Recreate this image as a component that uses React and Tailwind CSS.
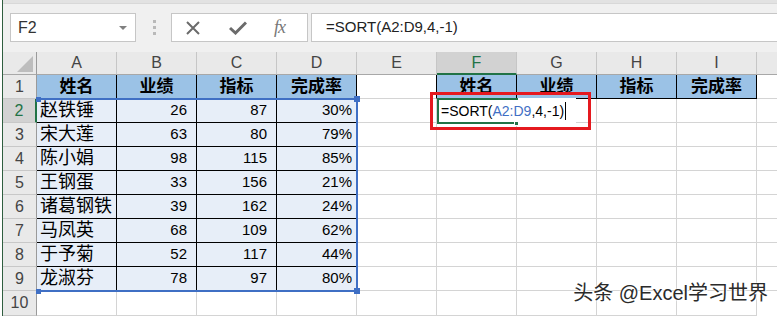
import React from 'react';

const data = [
  ['赵铁锤', 26, 87, '30%'],
  ['宋大莲', 63, 80, '79%'],
  ['陈小娟', 98, 115, '85%'],
  ['王钢蛋', 33, 156, '21%'],
  ['诸葛钢铁', 39, 162, '24%'],
  ['马凤英', 68, 109, '62%'],
  ['于予菊', 52, 117, '44%'],
  ['龙淑芬', 78, 97, '80%'],
];

const heads = ['姓名', '业绩', '指标', '完成率'];
const letters = ['A', 'B', 'C', 'D', 'E', 'F', 'G', 'H', 'I'];

function ColHeader({ letter }) {
  const active = letter === 'F';
  return (
    <div
      className={
        active
          ? 'flex items-center justify-center bg-[#d2d2d2] text-[#217346] border-r border-[#c6c6c6] border-b-2 border-b-[#217346] text-[16px]'
          : 'flex items-center justify-center bg-[#e9e9e9] text-[#444] border-r border-[#c6c6c6] border-b border-b-[#a8a8a8] text-[16px]'
      }
    >
      {letter}
    </div>
  );
}

function RowHeader({ n }) {
  const active = n === 2;
  return (
    <div
      className={
        active
          ? 'flex items-center justify-center bg-[#d2d2d2] text-[#217346] border-r-2 border-r-[#217346] border-b border-b-[#c8c8c8] text-[16px]'
          : 'flex items-center justify-center bg-[#e9e9e9] text-[#444] border-r border-r-[#9a9a9a] border-b border-b-[#c8c8c8] text-[16px]'
      }
    >
      {n}
    </div>
  );
}

function Empty({ dark }) {
  return <div className={dark ? 'border-r border-r-black border-b border-b-[#d4d4d4]' : 'border-r border-b border-[#d4d4d4]'} />;
}

function HeadCell({ text }) {
  return (
    <div className="flex items-center justify-center bg-[#9bc2e6] border-r border-b border-black font-bold text-[17px] text-black">
      {text}
    </div>
  );
}

export default function App() {
  return (
    <div className="w-[777px] h-[316px] overflow-hidden flex bg-white font-['Liberation_Sans','Noto_Sans_CJK_SC',sans-serif] relative">
      {/* sheet edge */}
      <div className="w-[3px] shrink-0 bg-white border-r border-[#2f5e3f]" />

      <div className="flex-1 flex flex-col">
        {/* formula bar */}
        <div className="h-[56px] bg-[#f0f0f0] flex flex-col">
          <div className="h-[4px] bg-[#e2e2e2] border-b border-[#d8d8d8]" />
          <div className="flex items-center h-[29px] mt-[9px]">
            <div className="ml-[7px] w-[126px] h-[29px] bg-white border border-[#c6c6c6] flex items-center justify-between pl-[7px] pr-[8px]">
              <span className="text-[16px] text-[#333]">F2</span>
              <span className="w-0 h-0 border-l-[4px] border-r-[4px] border-t-[4px] border-l-transparent border-r-transparent border-t-[#808080]" />
            </div>
            <div className="ml-[17px] w-[3px] flex flex-col gap-[3px]">
              <span className="w-[3px] h-[3px] bg-[#b9b9b9]" />
              <span className="w-[3px] h-[3px] bg-[#b9b9b9]" />
              <span className="w-[3px] h-[3px] bg-[#b9b9b9]" />
            </div>
            <div className="ml-[15px] w-[137px] h-[29px] bg-white border border-[#c6c6c6] flex items-center">
              <svg className="ml-[13px]" width="16" height="16" viewBox="0 0 16 16">
                <path d="M2 2 L14 14 M14 2 L2 14" stroke="#6b6b6b" strokeWidth="2" fill="none" />
              </svg>
              <svg className="ml-[28px]" width="18" height="14" viewBox="0 0 18 14">
                <path d="M1 7 L6.5 12 L17 1.5" stroke="#6b6b6b" strokeWidth="3" fill="none" />
              </svg>
              <span className="ml-[27px] font-['Liberation_Serif',serif] italic text-[18px] text-[#777] tracking-[-1px]">fx</span>
            </div>
            <div className="ml-[3px] flex-1 h-[29px] bg-white border border-r-0 border-[#c6c6c6] flex items-center pl-[14px] text-[15px] text-[#222]">
              =SORT(A2:D9,4,-1)
            </div>
          </div>
        </div>

        {/* sheet */}
        <div className="relative flex-1 grid grid-cols-[34px_repeat(9,80px)_1fr] grid-rows-[23px_repeat(9,24px)_1fr]">
          {/* column header row */}
          <div className="bg-[#e9e9e9] border-r border-r-[#9a9a9a] border-b border-b-[#a8a8a8] flex items-end justify-end pr-[3px] pb-[2px]">
            <svg width="16" height="16" viewBox="0 0 16 16">
              <path d="M16 0 L16 16 L0 16 Z" fill="#bdbdbd" />
            </svg>
          </div>
          {letters.map((l) => (
            <ColHeader key={l} letter={l} />
          ))}
          <div className="bg-[#e9e9e9] border-b border-b-[#a8a8a8]" />

          {/* row 1 */}
          <RowHeader n={1} />
          {heads.map((h) => (
            <HeadCell key={'a' + h} text={h} />
          ))}
          <Empty dark />
          {heads.map((h) => (
            <HeadCell key={'f' + h} text={h} />
          ))}
          <div className="border-b border-[#d4d4d4]" />

          {/* data rows */}
          {data.map((r, i) => (
            <React.Fragment key={i}>
              <RowHeader n={i + 2} />
              <div className="bg-[#e7eef8] border-r border-b border-black flex items-center pl-[3px] text-[18px] text-black whitespace-nowrap">
                {r[0]}
              </div>
              <div className="bg-[#e7eef8] border-r border-b border-black flex items-center justify-end pr-[9px] text-[15px] text-black">
                {r[1]}
              </div>
              <div className="bg-[#e7eef8] border-r border-b border-black flex items-center justify-end pr-[9px] text-[15px] text-black">
                {r[2]}
              </div>
              <div className="bg-[#e7eef8] border-r border-b border-black flex items-center justify-end pr-[4px] text-[15px] text-black">
                {r[3]}
              </div>
              {[0, 1, 2, 3, 4].map((k) => (
                <Empty key={k} />
              ))}
              <div className="border-b border-[#d4d4d4]" />
            </React.Fragment>
          ))}

          {/* row 10 */}
          <RowHeader n={10} />
          {letters.map((l) => (
            <Empty key={l} />
          ))}
          <div />

          {/* range finder A2:D9 */}
          <div className="absolute left-[34px] top-[46px] w-[321px] h-[194px] border-t-2 border-r-2 border-b-2 border-[#3f6fc4] pointer-events-none" />
          <span className="absolute left-[33px] top-[45px] w-[5px] h-[5px] bg-[#3f6fc4]" />
          <span className="absolute left-[351px] top-[44px] w-[6px] h-[6px] bg-[#3f6fc4]" />
          <span className="absolute left-[33px] top-[237px] w-[5px] h-[5px] bg-[#3f6fc4]" />
          <span className="absolute left-[351px] top-[236px] w-[6px] h-[6px] bg-[#3f6fc4]" />

          {/* in-cell editor F2 */}
          <div className="absolute left-[434px] top-[46px] w-[139px] h-[26px] bg-white flex items-center pl-[4px] text-[14px] text-black whitespace-nowrap">
            <span>=SORT(</span>
            <span className="text-[#3f6fc4]">A2:D9</span>
            <span>,4,-1)</span>
            <span className="ml-[1px] w-[1px] h-[18px] bg-black" />
          </div>
          <div className="absolute left-[434px] top-[46px] w-[81px] h-[26px] border-t-2 border-l-2 border-b-2 border-[#217346]" />
          <span className="absolute left-[511px] top-[69px] w-[5px] h-[5px] bg-[#217346] border border-white" />

          {/* red highlight */}
          <div className="absolute left-[427px] top-[40px] w-[161px] h-[38px] border-[3px] border-[#e5191f]" />
        </div>
      </div>

      {/* watermark */}
      <div className="absolute right-[9px] top-[281px] text-[20px] leading-[24px] text-[#2b2b2b] whitespace-nowrap [text-shadow:0_0_2px_#fff,0_0_2px_#fff,1px_1px_0_#fff]">
        头条 @Excel学习世界
      </div>
    </div>
  );
}
